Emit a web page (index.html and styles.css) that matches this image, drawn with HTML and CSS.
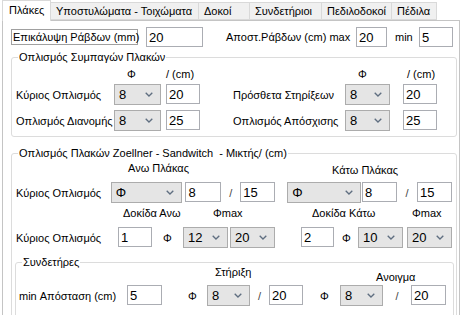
FILE: index.html
```html
<!DOCTYPE html>
<html lang="el">

<head>
  <meta charset="UTF-8" />
  <title>Πλάκες</title>
  <link rel="stylesheet" href="styles.css">
</head>

<body>
  <div class="tabs">
    <div class="tab active t-plakes">Πλάκες</div>
    <div class="tab t-ypost">Υποστυλώματα - Τοιχώματα</div>
    <div class="tab t-dokoi">Δοκοί</div>
    <div class="tab t-synd">Συνδετήριοι</div>
    <div class="tab t-pedilod">Πεδιλοδοκοί</div>
    <div class="tab t-pedila">Πέδιλα</div>
  </div>

  <div class="page">
    <!-- top row -->
    <div class="row top-row">
      <span class="boxed-label">Επικάλυψη Ράβδων (mm)</span>
      <input class="txt cover" value="20">
      <span class="lbl apost">Αποστ.Ράβδων (cm) max</span>
      <input class="txt apost-max" value="20">
      <span class="lbl min-lbl">min</span>
      <input class="txt apost-min" value="5">
    </div>

    <!-- solid slabs -->
    <fieldset class="group g1">
      <legend>Οπλισμός Συμπαγών Πλακών</legend>
      <div class="row head g1-head">
        <span class="h-phi-l">Φ</span>
        <span class="h-cm-l">/ (cm)</span>
        <span class="h-phi-r">Φ</span>
        <span class="h-cm-r">/ (cm)</span>
      </div>
      <div class="row g1-row first">
        <span class="lbl g1-lbl-l">Κύριος Οπλισμός</span>
        <div class="combo g1-cb-l"><span>8</span><svg width="8" height="5" viewBox="0 0 8 5"><polyline points="0.7,0.7 4,4 7.3,0.7" /></svg></div>
        <input class="txt g1-in-l" value="20">
        <span class="lbl g1-lbl-r">Πρόσθετα Στηρίξεων</span>
        <div class="combo g1-cb-r"><span>8</span><svg width="8" height="5" viewBox="0 0 8 5"><polyline points="0.7,0.7 4,4 7.3,0.7" /></svg></div>
        <input class="txt g1-in-r" value="20">
      </div>
      <div class="row g1-row second">
        <span class="lbl g1-lbl-l">Οπλισμός Διανομής</span>
        <div class="combo g1-cb-l"><span>8</span><svg width="8" height="5" viewBox="0 0 8 5"><polyline points="0.7,0.7 4,4 7.3,0.7" /></svg></div>
        <input class="txt g1-in-l" value="25">
        <span class="lbl g1-lbl-r">Οπλισμός Απόσχισης</span>
        <div class="combo g1-cb-r"><span>8</span><svg width="8" height="5" viewBox="0 0 8 5"><polyline points="0.7,0.7 4,4 7.3,0.7" /></svg></div>
        <input class="txt g1-in-r" value="25">
      </div>
    </fieldset>

    <!-- zoellner / sandwich -->
    <fieldset class="group g2">
      <legend>Οπλισμός Πλακών Zoellner - Sandwitch&nbsp; - Μικτής/ (cm)</legend>
      <div class="row head g2-head">
        <span class="h-ano">Ανω Πλάκας</span>
        <span class="h-kato">Κάτω Πλάκας</span>
      </div>
      <div class="row g2-row1">
        <span class="lbl r1-lbl">Κύριος Οπλισμός</span>
        <div class="combo r1-cb-a"><span>Φ</span><svg width="8" height="5" viewBox="0 0 8 5"><polyline points="0.7,0.7 4,4 7.3,0.7" /></svg></div>
        <input class="txt r1-in-a" value="8">
        <span class="slash r1-sl-a">/</span>
        <input class="txt r1-in-b" value="15">
        <div class="combo r1-cb-b"><span>Φ</span><svg width="8" height="5" viewBox="0 0 8 5"><polyline points="0.7,0.7 4,4 7.3,0.7" /></svg></div>
        <input class="txt r1-in-c" value="8">
        <span class="slash r1-sl-b">/</span>
        <input class="txt r1-in-d" value="15">
      </div>
      <div class="row head g2-sub">
        <span class="s-dok-ano">Δοκίδα Ανω</span>
        <span class="s-fmax-a">Φmax</span>
        <span class="s-dok-kato">Δοκίδα Κάτω</span>
        <span class="s-fmax-b">Φmax</span>
      </div>
      <div class="row g2-row2">
        <span class="lbl r2-lbl">Κύριος Οπλισμός</span>
        <input class="txt r2-in-a" value="1">
        <span class="phi r2-phi-a">Φ</span>
        <div class="combo r2-cb"><span>12</span><svg width="8" height="5" viewBox="0 0 8 5"><polyline points="0.7,0.7 4,4 7.3,0.7" /></svg></div>
        <div class="combo r2-cb next"><span>20</span><svg width="8" height="5" viewBox="0 0 8 5"><polyline points="0.7,0.7 4,4 7.3,0.7" /></svg></div>
        <input class="txt r2-in-b" value="2">
        <span class="phi r2-phi-b">Φ</span>
        <div class="combo r2-cb"><span>10</span><svg width="8" height="5" viewBox="0 0 8 5"><polyline points="0.7,0.7 4,4 7.3,0.7" /></svg></div>
        <div class="combo r2-cb last"><span>20</span><svg width="8" height="5" viewBox="0 0 8 5"><polyline points="0.7,0.7 4,4 7.3,0.7" /></svg></div>
      </div>

      <!-- stirrups -->
      <fieldset class="group g3">
        <legend>Συνδετήρες</legend>
        <div class="row head g3-head">
          <span class="h-stir">Στήριξη</span>
          <span class="h-anoig">Ανοιγμα</span>
        </div>
        <div class="row g3-row">
          <span class="lbl r3-lbl">min Απόσταση (cm)</span>
          <input class="txt r3-in-a" value="5">
          <span class="phi r3-phi-a">Φ</span>
          <div class="combo r3-cb"><span>8</span><svg width="8" height="5" viewBox="0 0 8 5"><polyline points="0.7,0.7 4,4 7.3,0.7" /></svg></div>
          <span class="slash r3-sl-a">/</span>
          <input class="txt r3-in-b" value="20">
          <span class="phi r3-phi-b">Φ</span>
          <div class="combo r3-cb"><span>8</span><svg width="8" height="5" viewBox="0 0 8 5"><polyline points="0.7,0.7 4,4 7.3,0.7" /></svg></div>
          <span class="slash r3-sl-b">/</span>
          <input class="txt r3-in-c" value="20">
        </div>
      </fieldset>
    </fieldset>
  </div>
</body>

</html>
```

FILE: styles.css
```css
/* Window */
html,
body {
  margin: 0;
  background: #fff;
  overflow: hidden;
}

body {
  width: 460px;
  height: 315px;
  font-family: "Liberation Sans", Arial, sans-serif;
  font-size: 11px;
  color: #000;
}

/* Tab strip */
.tabs {
  display: flex;
  align-items: flex-start;
  height: 21px;
  padding-left: 2px;
}

.tab {
  box-sizing: border-box;
  height: 18px;
  margin-top: 2px;
  padding-left: 5px;
  line-height: 16px;
  background: #f0f0f0;
  border: 1px solid #d9d9d9;
  border-left: none;
  white-space: nowrap;
}

.tab.active {
  position: relative;
  z-index: 1;
  height: 21px;
  margin-top: 0;
  padding-left: 6px;
  line-height: 19px;
  background: #fff;
  border-left: 1px solid #d9d9d9;
  border-bottom: none;
}

.t-plakes { width: 49px; }
.t-ypost { width: 148px; }
.t-dokoi { width: 51px; }
.t-synd { width: 72px; }
.t-pedilod { width: 70px; }
.t-pedila { width: 45px; }

/* Tab page */
.page {
  box-sizing: border-box;
  width: 458px;
  height: 295px;
  margin: -1px 0 0 2px;
  padding-top: 6px;
  border: 1px solid #c4c4c4;
  border-bottom: none;
  background: #fff;
  overflow: hidden;
}

.row {
  display: flex;
  align-items: center;
  height: 21px;
}

.row.head {
  height: 14px;
  align-items: flex-start;
  line-height: 14px;
}

.lbl {
  white-space: nowrap;
}

/* Controls */
.txt {
  box-sizing: border-box;
  height: 20px;
  margin: 0;
  padding: 0 2px;
  align-self: flex-start;
  border: 1px solid #abadb3;
  background: #fff;
  font-family: "Liberation Sans", Arial, sans-serif;
  font-size: 13px;
  color: #000;
  outline: none;
}

.combo {
  box-sizing: border-box;
  display: flex;
  align-items: center;
  justify-content: space-between;
  height: 21px;
  padding: 0 7px 0 4px;
  background: #e5e5e5;
  border: 1px solid #acacac;
  font-size: 13px;
}

.combo svg polyline {
  fill: none;
  stroke: #5f6e80;
  stroke-width: 1.3;
}

.slash {
  text-align: center;
  color: #444;
}

.phi {
  font-size: 11px;
}

/* Group boxes */
.group {
  box-sizing: border-box;
  min-width: 0;
  margin: 0;
  padding: 0 4px;
  border: 1px solid #dcdcdc;
  border-radius: 3px;
}

.group legend {
  margin-left: 2px;
  padding: 0 1px;
  line-height: 13px;
  white-space: nowrap;
}

/* Top row */
.top-row {
  height: 20px;
}

.boxed-label {
  box-sizing: border-box;
  width: 127px;
  height: 16px;
  margin-left: 8px;
  padding-left: 1px;
  line-height: 14px;
  border: 1px solid #a0a0a0;
  white-space: nowrap;
}

.cover { width: 57px; margin-left: 8px; }
.apost { width: 130px; margin-left: 23px; }
.apost-max { width: 31px; }
.min-lbl { width: 24px; margin-left: 8px; }
.apost-min { width: 34px; }

/* Solid slabs group */
.g1 {
  width: 446px;
  margin: 4px 0 0 8px;
  padding-bottom: 5px;
}

.g1-head { margin-top: 3px; }
.h-phi-l { width: 39px; margin-left: 111px; }
.h-cm-l { width: 192px; }
.h-phi-r { width: 49px; }

.g1-row.first { margin-top: 3px; }
.g1-row.second { margin-top: 5px; }
.g1-lbl-l { width: 98px; }
.g1-cb-l { width: 47px; }
.g1-in-l { width: 34px; margin-left: 5px; }
.g1-lbl-r { width: 112px; margin-left: 33px; }
.g1-cb-r { width: 45px; }
.g1-in-r { width: 34px; margin-left: 13px; }

/* Zoellner group */
.g2 {
  width: 446px;
  height: 200px;
  margin: 10px 0 0 8px;
}

.g2-head { margin-top: 1px; }
.h-ano { width: 204px; margin-left: 112px; }
.h-kato { margin-top: 2px; }

.g2-row1 { margin-top: 7px; }
.r1-lbl { width: 95px; }
.r1-cb-a { width: 72px; }
.r1-in-a { width: 36px; margin-left: 3px; }
.r1-sl-a { width: 19px; }
.r1-in-b { width: 35px; }
.r1-cb-b { width: 74px; margin-left: 12px; }
.r1-in-c { width: 35px; margin-left: 1px; }
.r1-sl-b { width: 20px; }
.r1-in-d { width: 35px; }

.g2-sub { margin-top: 3px; }
.s-dok-ano { width: 90px; margin-left: 107px; }
.s-fmax-a { width: 99px; }
.s-dok-kato { width: 100px; }

.g2-row2 { margin-top: 7px; }
.r2-lbl { width: 102px; }
.r2-in-a { width: 34px; }
.r2-phi-a { width: 20px; padding-left: 11px; }
.r2-cb { width: 45px; }
.r2-cb.next { margin-left: 2px; }
.r2-in-b { width: 33px; margin-left: 26px; }
.r2-phi-b { width: 16px; padding-left: 8px; }
.r2-cb.last { margin-left: 4px; }

/* Stirrups group */
.g3 {
  width: 439px;
  height: 80px;
  margin: 8px 0 0 -1px;
  padding-left: 3px;
}

.g3 legend { margin-left: 3px; }

.g3-head { margin-top: -4px; }
.h-stir { width: 161px; margin-left: 196px; }
.h-anoig { margin-top: 5px; }

.g3-row { margin-top: 6px; }
.r3-lbl { width: 108px; }
.r3-in-a { width: 35px; }
.r3-phi-a { width: 19px; padding-left: 26px; }
.r3-cb { width: 43px; }
.r3-sl-a { width: 19px; }
.r3-in-b { width: 34px; }
.r3-phi-b { width: 20px; padding-left: 17px; }
.r3-sl-b { width: 28px; }
.r3-in-c { width: 35px; }
```
